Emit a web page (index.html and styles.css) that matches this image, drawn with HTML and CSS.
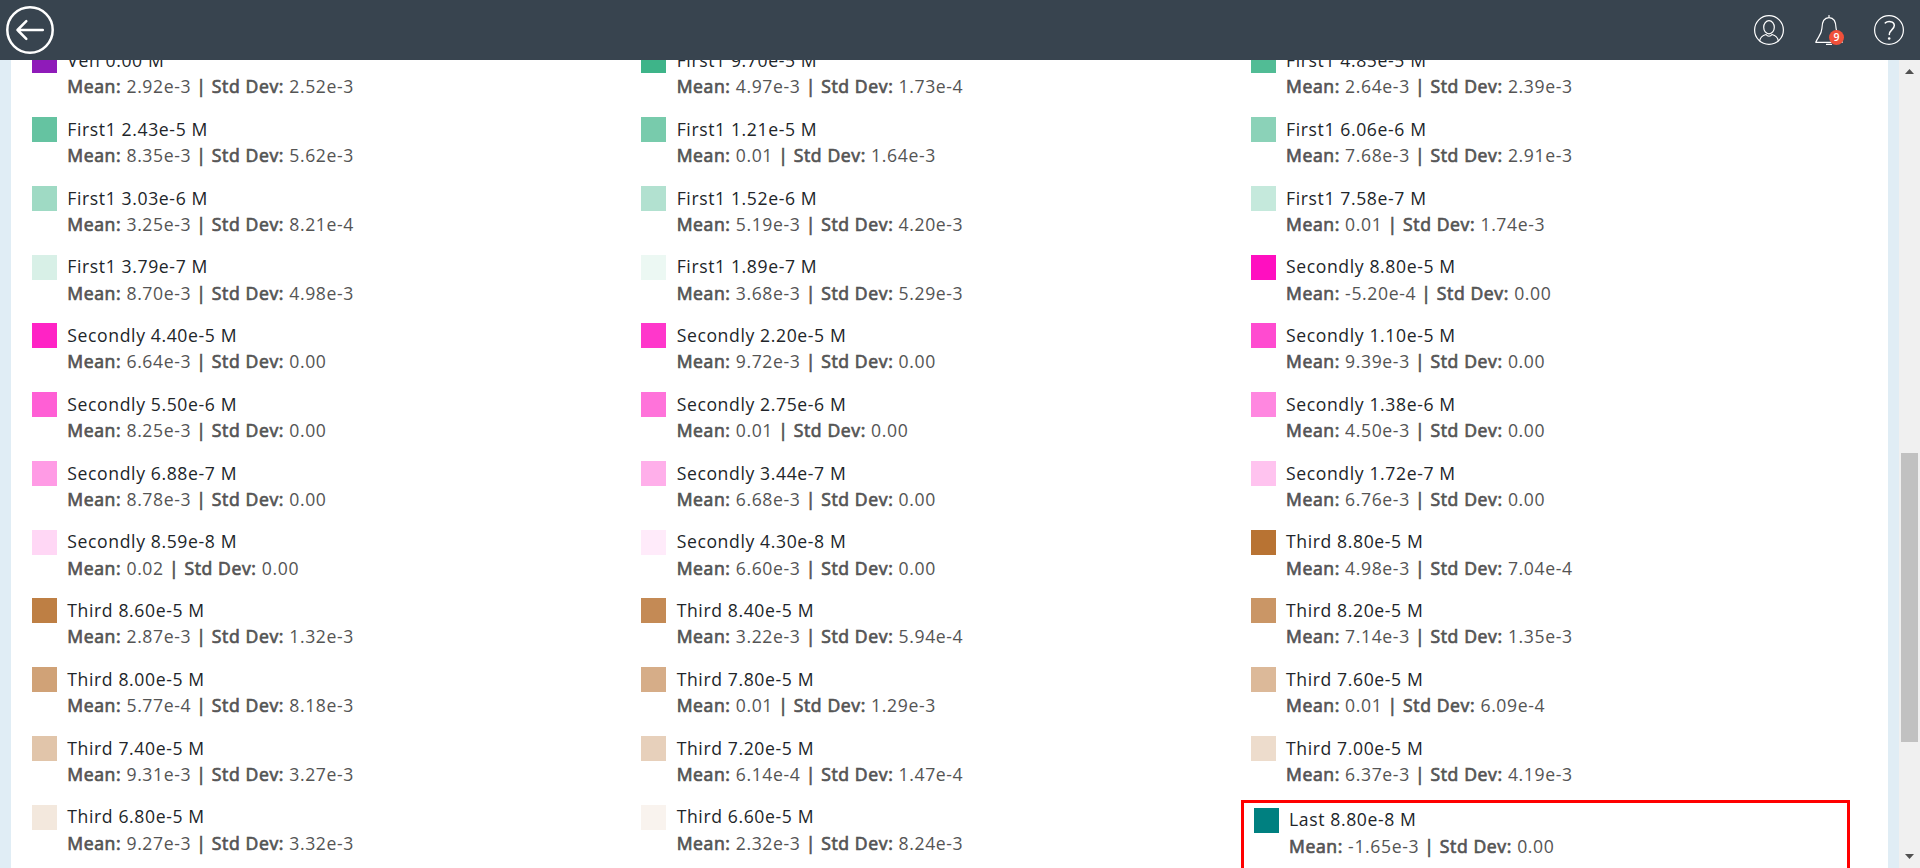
FILE: index.html
```
<!DOCTYPE html>
<html lang="en">
<head>
<meta charset="utf-8">
<title>Legend</title>
<link rel="stylesheet" href="styles.css">
</head>
<body>
<header class="topbar">
  <svg class="back" viewBox="0 0 48 48"><circle cx="24" cy="24" r="22.7" stroke-width="2.5"/><path d="M36.800 24H11.500M20.300 15.200L11.500 24l8.800 8.800" stroke-width="2.500"/></svg>
  <nav class="actions">
    <svg class="icon" viewBox="0 0 30 30"><circle cx="15" cy="15" r="14.400"/><ellipse cx="15" cy="12.300" rx="5.300" ry="6.600"/><path d="M5.600 25.800c.8-3.800 2.300-5 6.400-6.300 1.600 2.300 4.400 2.300 6 0 4.100 1.300 5.600 2.500 6.400 6.300"/></svg>
    <span class="bell">
      <svg class="icon" viewBox="0 0 30 30"><path d="M15 .5v2M1.800 27.300C3.600 22 7.600 20 7.900 13.500 8 6.500 10 2.600 15 2.600s7 3.900 7.100 10.900c.3 6.500 4.300 8.500 6.100 13.800zM12.500 29.400h5"/></svg>
      <span class="badge">9</span>
    </span>
    <svg class="icon" viewBox="0 0 30 30"><circle cx="15" cy="15" r="14.400"/><path d="M11.300 7.900C13.500 6 20.300 5.700 20.300 10.600c0 3.800-5 4.400-5 9" stroke-width="1.500"/><circle class="dot" cx="15.200" cy="23.500" r="1.300"/></svg>
  </nav>
</header>
<div class="viewport">
  <main class="panel"><div class="legend" id="legend"></div></main>
  <aside class="scrollbar">
    <svg class="arrow" viewBox="0 0 9 5"><path d="M0 5L4.500 0 9 5z"/></svg>
    <div class="track"><div class="thumb"></div></div>
    <svg class="arrow" viewBox="0 0 9 5"><path d="M0 0h9L4.500 5z"/></svg>
  </aside>
</div>
<script src="legend.js"></script>
</body>
</html>
```
FILE: styles.css
```
* { box-sizing: border-box; }
body { margin: 0; height: 868px; overflow: hidden; display: flex; flex-direction: column; font-family: "Open Sans", sans-serif; background: #fff; }
.topbar { flex: none; height: 60px; padding: 0 15px 0 6px; background: #38444f; display: flex; align-items: center; justify-content: space-between; }
.topbar svg { display: block; fill: none; stroke: #fff; stroke-linecap: round; stroke-linejoin: round; }
.back { width: 48px; height: 48px; }
.actions { display: flex; gap: 30px; padding-right: 1px; }
.icon { width: 30px; height: 30px; stroke-width: 1.2; }
.topbar .dot { fill: #fff; stroke: none; }
.bell { position: relative; }
.badge { position: absolute; left: 15px; top: 15px; width: 15px; height: 15px; border-radius: 50%; background: #f0503a; color: #fff; font-size: 10.5px; font-weight: 600; line-height: 14px; text-align: center; }
.viewport { flex: 1; min-height: 0; display: flex; background: #e0edf5; }
.panel { flex: 1; margin: 0 11px; padding: 0 38px 0 11px; background: #fff; overflow: hidden; }
.legend { display: grid; grid-template-columns: repeat(3, 1fr); grid-auto-rows: 68.75px; margin-top: -16.7px; }
.item { display: flex; gap: 10.3px; padding: 5px 10px; height: 68.75px; }
.item.marked { border: 3px solid #f00; height: 75px; }
.swatch { flex: none; width: 25px; height: 25px; }
.text { font-size: 17.6px; letter-spacing: 0.615px; line-height: 24px; white-space: nowrap; }
.name { color: #212529; margin-top: -0.2px; }
.stats { color: #545454; margin-top: 2.27px; }
.label { -webkit-text-stroke: 0.7px #545454; }
.scrollbar { width: 21px; background: #f0f0f0; display: flex; flex-direction: column; align-items: center; padding: 9px 0; }
.arrow { width: 9px; height: 5px; fill: #505050; flex: none; }
.track { flex: 1; padding-top: 379px; }
.thumb { width: 17px; height: 289px; background: #c1c1c1; }
```
FILE: legend.js
```
const MINT = [62, 180, 137];
const PINK = [255, 15, 192];
const COPPER = [184, 115, 51];

// Fades a base colour towards white along a dilution series.
function series(name, base, rows) {
  return rows.map(([dose, mean, dev], i) => ({
    name: `${name} ${dose} M`,
    mean,
    dev,
    color: `rgb(${base.map(c => Math.round(c + (255 - c) * i / rows.length)).join(",")})`
  }));
}

const items = [
  { name: "Ven 0.00 M", mean: "2.92e-3", dev: "2.52e-3", color: "#8f1bb9" },
  ...series("First1", MINT, [
    ["9.70e-5", "4.97e-3", "1.73e-4"], ["4.85e-5", "2.64e-3", "2.39e-3"],
    ["2.43e-5", "8.35e-3", "5.62e-3"], ["1.21e-5", "0.01", "1.64e-3"],
    ["6.06e-6", "7.68e-3", "2.91e-3"], ["3.03e-6", "3.25e-3", "8.21e-4"],
    ["1.52e-6", "5.19e-3", "4.20e-3"], ["7.58e-7", "0.01", "1.74e-3"],
    ["3.79e-7", "8.70e-3", "4.98e-3"], ["1.89e-7", "3.68e-3", "5.29e-3"]
  ]),
  ...series("Secondly", PINK, [
    ["8.80e-5", "-5.20e-4", "0.00"], ["4.40e-5", "6.64e-3", "0.00"],
    ["2.20e-5", "9.72e-3", "0.00"], ["1.10e-5", "9.39e-3", "0.00"],
    ["5.50e-6", "8.25e-3", "0.00"], ["2.75e-6", "0.01", "0.00"],
    ["1.38e-6", "4.50e-3", "0.00"], ["6.88e-7", "8.78e-3", "0.00"],
    ["3.44e-7", "6.68e-3", "0.00"], ["1.72e-7", "6.76e-3", "0.00"],
    ["8.59e-8", "0.02", "0.00"], ["4.30e-8", "6.60e-3", "0.00"]
  ]),
  ...series("Third", COPPER, [
    ["8.80e-5", "4.98e-3", "7.04e-4"], ["8.60e-5", "2.87e-3", "1.32e-3"],
    ["8.40e-5", "3.22e-3", "5.94e-4"], ["8.20e-5", "7.14e-3", "1.35e-3"],
    ["8.00e-5", "5.77e-4", "8.18e-3"], ["7.80e-5", "0.01", "1.29e-3"],
    ["7.60e-5", "0.01", "6.09e-4"], ["7.40e-5", "9.31e-3", "3.27e-3"],
    ["7.20e-5", "6.14e-4", "1.47e-4"], ["7.00e-5", "6.37e-3", "4.19e-3"],
    ["6.80e-5", "9.27e-3", "3.32e-3"], ["6.60e-5", "2.32e-3", "8.24e-3"]
  ]),
  { name: "Last 8.80e-8 M", mean: "-1.65e-3", dev: "0.00", color: "#008080", marked: true }
];

document.getElementById("legend").innerHTML = items.map(d => `
  <div class="item${d.marked ? " marked" : ""}">
    <span class="swatch" style="background:${d.color}"></span>
    <div class="text">
      <div class="name">${d.name}</div>
      <div class="stats"><span class="label">Mean:</span> ${d.mean} <span class="label">|</span> <span class="label">Std Dev:</span> ${d.dev}</div>
    </div>
  </div>`).join("");
```
